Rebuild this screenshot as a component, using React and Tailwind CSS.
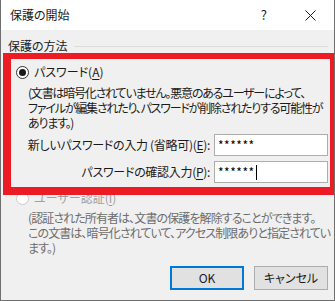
const font = "font-['Noto_Sans_CJK_JP','Noto_Sans',sans-serif] [font-feature-settings:'palt']";

const Radio = ({ checked, disabled }) => (
  <span
    className={
      "flex h-[13px] w-[13px] shrink-0 items-center justify-center rounded-full border bg-white " +
      (disabled ? "border-[#cccccc]" : "border-[#333333]")
    }
  >
    {checked ? <span className="h-[7px] w-[7px] rounded-full bg-[#1a1a1a]" /> : null}
  </span>
);

const Field = ({ label, keyLetter, value, caret }) => (
  <div className="flex h-[22px] items-center justify-end gap-[4px] pr-[6px]">
    <span className="whitespace-nowrap text-[12px] tracking-[-0.3px] text-[#1a1a1a]">
      {label}(<span className="underline underline-offset-2">{keyLetter}</span>):
    </span>
    <div className="flex h-[22px] w-[114px] items-center border border-[#adadad] bg-white pl-[3px]">
      <span className="text-[12px] leading-none tracking-[0.5px] text-black">{value}</span>
      {caret ? <span className="ml-[1px] h-[15px] w-px bg-black" /> : null}
    </div>
  </div>
);

export default function App() {
  return (
    <div className={"relative h-[301px] w-[335px] overflow-hidden border-x border-b border-[#6f6f6f] bg-[#f0f0f0] " + font}>
      <div className="flex h-[30px] items-center bg-white pl-[9px] pr-[18px] text-[12px] text-[#1a1a1a]">
        <span className="flex-1">保護の開始</span>
        <span className="mr-[38px] text-[13px]">?</span>
        <svg width="11" height="11" viewBox="0 0 11 11">
          <path d="M0.5 0.5L10.5 10.5M10.5 0.5L0.5 10.5" stroke="#1a1a1a" strokeWidth="1" />
        </svg>
      </div>

      <div className="pt-[9px]">
        <div className="flex h-[14px] items-center gap-[6px] pl-[7px] pr-[6px]">
          <span className="whitespace-nowrap text-[12px] text-[#1a1a1a]">保護の方法</span>
          <span className="h-px flex-1 bg-[#dcdcdc]" />
        </div>

        <div className="mt-[11px] flex h-[16px] items-center gap-[5px] pl-[15px]">
          <Radio checked />
          <span className="text-[12px] text-[#1a1a1a]">
            パスワード(<span className="underline underline-offset-2">A</span>)
          </span>
        </div>

        <p className="mt-[5px] whitespace-nowrap pl-[27px] text-[12px] leading-[15px] tracking-[-1.2px] text-[#1a1a1a]">
          (文書は暗号化されていません。悪意のあるユーザーによって、
          <br />
          ファイルが編集されたり、パスワードが削除されたりする可能性が
          <br />
          あります。)
        </p>

        <div className="mt-[4px] flex flex-col gap-[5px]">
          <Field label="新しいパスワードの入力 (省略可)" keyLetter="E" value="******" />
          <Field label="パスワードの確認入力" keyLetter="P" value="******" caret />
        </div>

        <div className="mt-[7px] flex h-[16px] items-center gap-[5px] pl-[15px]">
          <Radio disabled />
          <span className="text-[12px] text-[#a0a0a0]">
            ユーザー認証(<span className="underline underline-offset-2">I</span>)
          </span>
        </div>

        <p className="mt-[4px] whitespace-nowrap pl-[27px] text-[12px] leading-[15px] tracking-[-0.9px] text-[#6d6d6d]">
          (認証された所有者は、文書の保護を解除することができます。
          <br />
          この文書は、暗号化されていて、アクセス制限ありと指定されてい
          <br />
          ます。)
        </p>

        <div className="mt-[11px] flex justify-end gap-[10px] pr-[6px]">
          <button className="h-[24px] w-[74px] border-2 border-[#0078d7] bg-[#e1e1e1] text-[12px] text-[#1a1a1a]">
            OK
          </button>
          <button className="h-[24px] w-[74px] border border-[#adadad] bg-[#e1e1e1] text-[12px] text-[#1a1a1a]">
            キャンセル
          </button>
        </div>
      </div>

      <div className="pointer-events-none absolute left-[2px] top-[53px] h-[142px] w-[333px] border-b-[8px] border-l-[8px] border-r-[6px] border-t-[6px] border-[#ed1c24]" />
    </div>
  );
}
